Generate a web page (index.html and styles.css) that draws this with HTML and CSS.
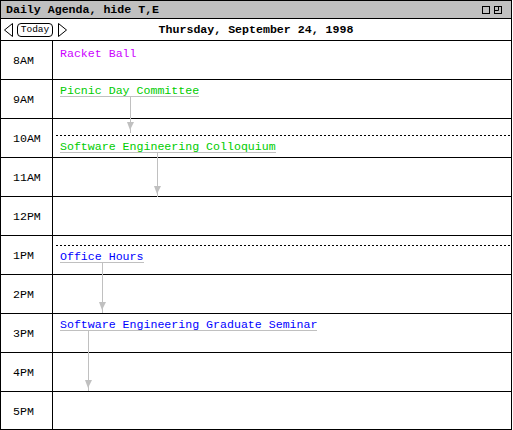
FILE: index.html
```html
<!DOCTYPE html>
<html lang="en">
<head>
  <meta charset="UTF-8">
  <title>Daily Agenda</title>
  <link rel="stylesheet" href="styles.css">
</head>
<body>
  <div class="window">
    <div class="titlebar">
      <span class="title">Daily Agenda, hide T,E</span>
      <span class="win-buttons">
        <svg width="8" height="8" viewBox="0 0 8 8"><rect x="0.5" y="0.5" width="7" height="7" fill="none" stroke="#000"/></svg>
        <svg width="8" height="8" viewBox="0 0 8 8"><rect x="0.5" y="0.5" width="7" height="7" fill="none" stroke="#000"/><path d="M4.5 0.5V4.5H0.5" fill="none" stroke="#000"/></svg>
      </span>
    </div>

    <div class="navbar">
      <div class="nav-controls">
        <svg class="arrow-btn" width="9" height="14" viewBox="0 0 9 14"><path d="M8.5 0.5L0.5 7L8.5 13.5Z" fill="none" stroke="#000"/></svg>
        <span class="today-btn">Today</span>
        <svg class="arrow-btn" width="9" height="14" viewBox="0 0 9 14"><path d="M0.5 0.5L8.5 7L0.5 13.5Z" fill="none" stroke="#000"/></svg>
      </div>
      <div class="date">Thursday, September 24, 1998</div>
    </div>

    <div class="agenda">
      <div class="hour"><div class="time">8AM</div><div class="slot"></div></div>
      <div class="hour"><div class="time">9AM</div><div class="slot"></div></div>
      <div class="hour"><div class="time">10AM</div><div class="slot"></div></div>
      <div class="hour"><div class="time">11AM</div><div class="slot"></div></div>
      <div class="hour"><div class="time">12PM</div><div class="slot"></div></div>
      <div class="hour"><div class="time">1PM</div><div class="slot"></div></div>
      <div class="hour"><div class="time">2PM</div><div class="slot"></div></div>
      <div class="hour"><div class="time">3PM</div><div class="slot"></div></div>
      <div class="hour"><div class="time">4PM</div><div class="slot"></div></div>
      <div class="hour"><div class="time">5PM</div><div class="slot"></div></div>

      <div class="events">
        <div class="event purple plain" style="top: 7px;">Racket Ball</div>

        <div class="event green" style="top: 44px;">Picnic Day Committee</div>
        <div class="duration" style="left: 129px; top: 56px; height: 36px;"></div>

        <div class="start-mark" style="top: 94px;"></div>
        <div class="event green" style="top: 100px;">Software Engineering Colloquium</div>
        <div class="duration" style="left: 156px; top: 112px; height: 44px;"></div>

        <div class="start-mark" style="top: 204px;"></div>
        <div class="event blue" style="top: 210px;">Office Hours</div>
        <div class="duration" style="left: 101px; top: 222px; height: 50px;"></div>

        <div class="event blue" style="top: 278px;">Software Engineering Graduate Seminar</div>
        <div class="duration" style="left: 87px; top: 290px; height: 60px;"></div>
      </div>
    </div>
  </div>
</body>
</html>
```

FILE: styles.css
```css
body {
  margin: 0;
  background: #ffffff;
  font-family: "Liberation Mono", "DejaVu Sans Mono", monospace;
  font-size: 11.6px;
  color: #000;
}

.window {
  position: relative;
  width: 512px;
  height: 430px;
  box-sizing: border-box;
  border: 1px solid #000;
  overflow: hidden;
}

/* title bar */
.titlebar {
  display: flex;
  justify-content: space-between;
  align-items: center;
  height: 17px;
  line-height: 17px;
  padding: 0 9px 0 5px;
  background: #c0c0c0;
  border-bottom: 1px solid #000;
}

.title {
  font-weight: bold;
}

.win-buttons {
  display: flex;
  gap: 4px;
}

.win-buttons svg {
  display: block;
}

/* date navigation */
.navbar {
  display: grid;
  grid-template-columns: 1fr auto 1fr;
  align-items: center;
  height: 21px;
  line-height: 21px;
  border-bottom: 1px solid #000;
}

.nav-controls {
  display: flex;
  align-items: center;
  padding-left: 3px;
}

.arrow-btn {
  display: block;
}

.today-btn {
  box-sizing: border-box;
  width: 36px;
  height: 14px;
  margin: 0 5px 0 4px;
  border: 1px solid #000;
  border-radius: 4px;
  font-size: 9.5px;
  line-height: 12px;
  text-align: center;
}

.date {
  font-weight: bold;
}

/* hour grid */
.agenda {
  position: relative;
}

.hour {
  display: flex;
  height: 38px;
  border-bottom: 1px solid #000;
}

.time {
  display: flex;
  align-items: center;
  width: 52px;
  padding-left: 12px;
  box-sizing: border-box;
  border-right: 1px solid #000;
  line-height: 13px;
}

.slot {
  flex: 1;
}

/* events */
.events {
  position: absolute;
  inset: 0;
}

.event {
  position: absolute;
  left: 59px;
  height: 11px;
  line-height: 11px;
  white-space: nowrap;
  border-bottom: 1px solid #c0c0c0;
}

.event.plain {
  border-bottom-color: transparent;
}

.purple { color: #cc00ff; }
.green { color: #00cc00; }
.blue { color: #0000ff; }

.start-mark {
  position: absolute;
  left: 55px;
  right: 0;
  height: 1px;
  background: repeating-linear-gradient(90deg, #000 0 2px, transparent 2px 4px);
}

.duration {
  position: absolute;
  width: 1px;
  background: #c0c0c0;
}

.duration::after {
  content: "";
  position: absolute;
  left: -3px;
  bottom: 3px;
  border-left: 3px solid transparent;
  border-right: 4px solid transparent;
  border-top: 8px solid #c0c0c0;
}
```
